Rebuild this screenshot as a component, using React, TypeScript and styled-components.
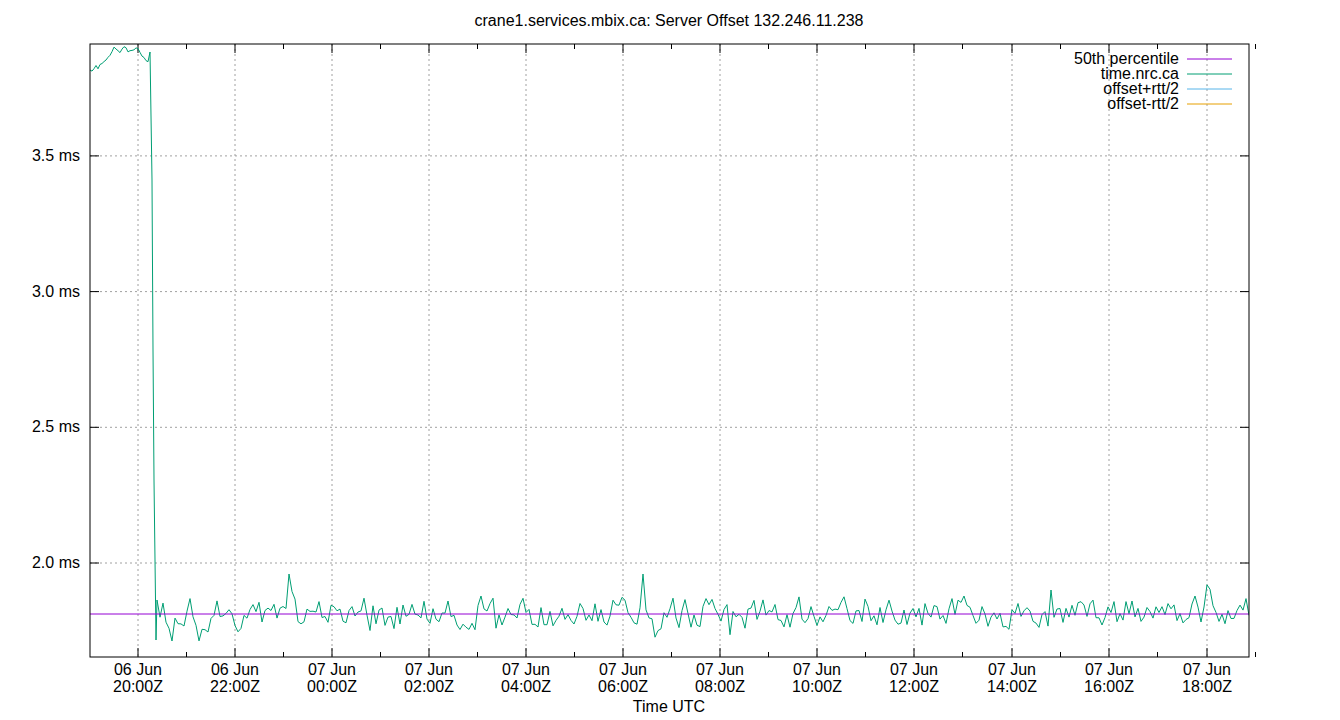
import styled, { createGlobalStyle } from "styled-components";

const Global = createGlobalStyle`
  body { margin: 0; background: #fff; font-family: "Liberation Sans", Arial, sans-serif; }
`;

const Page = styled.div`
  width: 1340px;
  height: 720px;
  background: #fff;
`;

const Chart = styled.svg`
  display: block;
  font-family: "Liberation Sans", Arial, sans-serif;
  font-size: 16px;
`;

const L = 90, R = 1249, T = 44, B = 657;
const yOf = (ms: number) => 563 - (ms - 2.0) * 271.4;
const xTicks = [138, 235, 332, 429, 526, 623, 720, 817, 914, 1012, 1109, 1207];
const xLabels = [
  ["06 Jun", "20:00Z"], ["06 Jun", "22:00Z"], ["07 Jun", "00:00Z"], ["07 Jun", "02:00Z"],
  ["07 Jun", "04:00Z"], ["07 Jun", "06:00Z"], ["07 Jun", "08:00Z"], ["07 Jun", "10:00Z"],
  ["07 Jun", "12:00Z"], ["07 Jun", "14:00Z"], ["07 Jun", "16:00Z"], ["07 Jun", "18:00Z"],
];
const yTicks = [2.0, 2.5, 3.0, 3.5];

// deterministic noise
let seed = 11;
const rnd = () => {
  seed = (seed * 16807) % 2147483647;
  return seed / 2147483647;
};

const buildLine = () => {
  const pts: string[] = [];
  for (let x = 90; x <= 148; x += 2) {
    const y = x < 112 ? 70 - (x - 90) * 0.8 + rnd() * 6 : 46 + rnd() * 8 + (x > 140 ? 10 : 0);
    pts.push(`${x},${y.toFixed(1)}`);
  }
  pts.push("150,52", "152,180", "153,350", "154,480", "155,560", "156,640", "157,600");
  let y = 613;
  for (let x = 160; x <= 1249; x += 3) {
    const spike = rnd() < 0.06 ? (rnd() - 0.5) * 60 : 0;
    y = 0.4 * y + 0.6 * (613 + (rnd() - 0.5) * 48) + spike;
    y = Math.min(656, Math.max(574, y));
    pts.push(`${x},${y.toFixed(1)}`);
  }
  return pts.join(" ");
};
const line = buildLine();

const legend = [
  ["50th percentile", "#9400d3"],
  ["time.nrc.ca", "#009e73"],
  ["offset+rtt/2", "#56b4e9"],
  ["offset-rtt/2", "#e69f00"],
];

export default function App() {
  return (
    <Page>
      <Global />
      <Chart width={1340} height={720}>
        <text x={669} y={26} textAnchor="middle">crane1.services.mbix.ca: Server Offset 132.246.11.238</text>
        {xTicks.map((x) => (
          <line key={x} x1={x} x2={x} y1={T} y2={B} stroke="#a0a0a0" strokeDasharray="2,3" />
        ))}
        {yTicks.map((v) => (
          <line key={v} x1={L} x2={R} y1={yOf(v)} y2={yOf(v)} stroke="#a0a0a0" strokeDasharray="2,3" />
        ))}
        {xTicks.map((x) => (
          <g key={"t" + x} stroke="#000">
            <line x1={x} x2={x} y1={B} y2={B - 9} />
            <line x1={x} x2={x} y1={T} y2={T + 9} />
            <line x1={x + 48.5} x2={x + 48.5} y1={B} y2={B - 5} />
            <line x1={x + 48.5} x2={x + 48.5} y1={T} y2={T + 5} />
          </g>
        ))}
        {yTicks.map((v) => (
          <g key={"yt" + v} stroke="#000">
            <line x1={L} x2={L + 9} y1={yOf(v)} y2={yOf(v)} />
            <line x1={R} x2={R - 9} y1={yOf(v)} y2={yOf(v)} />
          </g>
        ))}
        {yTicks.map((v) => (
          <text key={"yl" + v} x={80} y={yOf(v) + 5} textAnchor="end">{v.toFixed(1)} ms</text>
        ))}
        {xLabels.map(([a, b], i) => (
          <g key={"xl" + i}>
            <text x={xTicks[i]} y={675} textAnchor="middle">{a}</text>
            <text x={xTicks[i]} y={692} textAnchor="middle">{b}</text>
          </g>
        ))}
        <text x={669} y={712} textAnchor="middle">Time UTC</text>
        <svg x={L} y={T} width={R - L} height={B - T} viewBox={`${L} ${T} ${R - L} ${B - T}`} overflow="hidden">
          <polyline points={line} fill="none" stroke="#009e73" strokeWidth={1} />
        </svg>
        <line x1={L} x2={R} y1={614} y2={614} stroke="#9400d3" />
        {legend.map(([name, c], i) => (
          <g key={name}>
            <text x={1179} y={64 + i * 15} textAnchor="end">{name}</text>
            <line x1={1187} x2={1232} y1={59 + i * 15} y2={59 + i * 15} stroke={c} />
          </g>
        ))}
        <rect x={L} y={T} width={R - L} height={B - T} fill="none" stroke="#000" />
      </Chart>
    </Page>
  );
}
